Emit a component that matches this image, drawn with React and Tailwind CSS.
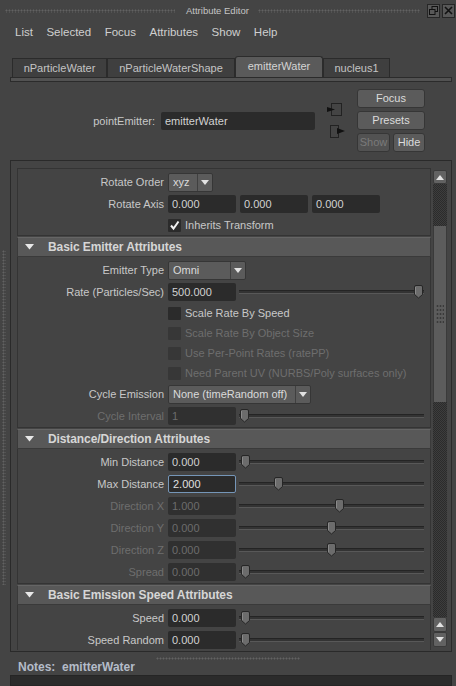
import React from "react";

function DownTri() {
  return (
    <svg width="8" height="5" viewBox="0 0 8 5">
      <path d="M0 0 H8 L4 5 Z" fill="#e2e2e2" />
    </svg>
  );
}

function UpTri() {
  return (
    <svg width="8" height="5" viewBox="0 0 8 5">
      <path d="M0 5 H8 L4 0 Z" fill="#e2e2e2" />
    </svg>
  );
}

function Dropdown({ text, w }) {
  return (
    <div className={`${w} h-[19px] flex rounded-[2px] bg-[#5b5b5b] border border-[#363636] overflow-hidden`}>
      <div className="flex-1 pl-[4px] flex items-center text-[#dadada] whitespace-nowrap">{text}</div>
      <div className="w-[15px] border-l border-[#404040] flex items-center justify-center">
        <DownTri />
      </div>
    </div>
  );
}

function Field({ value, disabled, focused }) {
  const base = "w-[68px] h-[18px] rounded-[2px] pl-[4px] flex items-center shrink-0";
  const cls = focused
    ? "bg-[#2b2b2b] border border-[#7596b8] text-[#e0e0e0] pl-[3px]"
    : disabled
    ? "bg-[#303030] text-[#6c6c6c]"
    : "bg-[#2b2b2b] text-[#d2d2d2]";
  return <div className={`${base} ${cls}`}>{value}</div>;
}

function Thumb() {
  return (
    <svg width="11" height="14" viewBox="0 0 11 14">
      <path
        d="M1.5 2 Q1.5 0.5 3 0.5 H8 Q9.5 0.5 9.5 2 V9.5 L5.5 13 L1.5 9.5 Z"
        fill="#6c6c6c"
        stroke="#262626"
      />
      <path d="M2.5 2 V9" stroke="#8a8a8a" strokeWidth="1" />
    </svg>
  );
}

function Slider({ pos }) {
  return (
    <div className="relative ml-[3px] w-[185px] h-[16px] flex items-center">
      <div className="w-full h-[4px] bg-[#333] border-t border-[#242424] border-b border-b-[#585858]" />
      <div className="absolute top-[1px]" style={{ left: pos }}>
        <Thumb />
      </div>
    </div>
  );
}

function Label({ text, disabled }) {
  return (
    <div
      className={`w-[146px] shrink-0 text-right whitespace-nowrap ${
        disabled ? "text-[#6e6e6e]" : "text-[#c8c8c8]"
      }`}
    >
      {text}
    </div>
  );
}

function Row({ label, disabled, children }) {
  return (
    <div className="flex items-center h-[22px]">
      <Label text={label} disabled={disabled} />
      <div className="ml-[4px] flex items-center">{children}</div>
    </div>
  );
}

function SliderRow({ label, value, pos, disabled, focused }) {
  return (
    <Row label={label} disabled={disabled}>
      <Field value={value} disabled={disabled} focused={focused} />
      <Slider pos={pos} />
    </Row>
  );
}

function Checkbox({ checked, disabled }) {
  return (
    <div
      className={`w-[13px] h-[13px] rounded-[1px] flex items-center justify-center shrink-0 ${
        disabled ? "bg-[#373737]" : "bg-[#2b2b2b]"
      }`}
    >
      {checked && (
        <svg width="11" height="11" viewBox="0 0 11 11">
          <path d="M2 5.5 L4.5 8.5 L9.5 1.5" stroke="#f0f0f0" strokeWidth="2" fill="none" />
        </svg>
      )}
    </div>
  );
}

function CheckRow({ text, checked, disabled }) {
  return (
    <div className="flex items-center h-[20px]">
      <div className="w-[146px] shrink-0" />
      <div className="ml-[4px] flex items-center">
        <Checkbox checked={checked} disabled={disabled} />
        <span className={`ml-[4px] whitespace-nowrap ${disabled ? "text-[#6e6e6e]" : "text-[#c8c8c8]"}`}>
          {text}
        </span>
      </div>
    </div>
  );
}

function Header({ title }) {
  return (
    <div className="h-[20px] shrink-0 bg-[#585858] border border-[#3a3a3a] border-t-[#656565] flex items-center">
      <div className="ml-[7px] flex items-center">
        <svg width="9" height="6" viewBox="0 0 9 6">
          <path d="M0 0 H9 L4.5 5.5 Z" fill="#e8e8e8" />
        </svg>
      </div>
      <div className="ml-[14px] font-bold text-[12px] text-[#d6d6d6] whitespace-nowrap tracking-[-0.1px]">
        {title}
      </div>
    </div>
  );
}

function Body({ children }) {
  return <div className="border border-t-0 border-[#343434] pt-[2px] shrink-0">{children}</div>;
}

function Tab({ text, w, active }) {
  return active ? (
    <div
      className={`${w} h-[21px] bg-[#5a5a5a] border border-b-0 border-[#2c2c2c] rounded-t-[3px] flex items-center justify-center text-[#d4d4d4] pb-[1px]`}
    >
      {text}
    </div>
  ) : (
    <div
      className={`${w} h-[19px] bg-[#3f3f3f] border border-b-0 border-[#2b2b2b] flex items-center justify-center text-[#c4c4c4]`}
    >
      {text}
    </div>
  );
}

function Button({ text, w, disabled }) {
  return (
    <div
      className={`${w} h-[19px] rounded-[3px] bg-[#5b5b5b] border border-[#363636] flex items-center justify-center ${
        disabled ? "text-[#7a7a7a] bg-[#525252]" : "text-[#dcdcdc]"
      }`}
    >
      {text}
    </div>
  );
}

const dots =
  "bg-[radial-gradient(circle,#626262_0.9px,transparent_1.1px)] bg-[length:3px_3px]";

export default function App() {
  return (
    <div className="w-[456px] h-[686px] bg-[#444444] overflow-hidden flex flex-col font-['Liberation_Sans',Arial,sans-serif] text-[11px] leading-none text-[#c8c8c8]">
      {/* Title bar */}
      <div className="h-[21px] shrink-0 flex items-center pl-[5px]">
        <div className={`w-[170px] h-[4px] ${dots}`} />
        <div className="ml-[11px] w-[66px] text-[9.5px] text-[#c4c4c4] whitespace-nowrap">Attribute Editor</div>
        <div className={`ml-[6px] w-[162px] h-[4px] ${dots}`} />
        <div className="ml-[7px] w-[13px] h-[14px] bg-[#585858] border border-[#262626] flex items-center justify-center">
          <svg width="9" height="9" viewBox="0 0 9 9">
            <rect x="3" y="0.5" width="5.5" height="5" fill="none" stroke="#111" />
            <rect x="0.5" y="3.5" width="5.5" height="5" fill="#585858" stroke="#111" />
          </svg>
        </div>
        <div className="ml-[2px] w-[13px] h-[14px] bg-[#585858] border border-[#262626] flex items-center justify-center">
          <svg width="9" height="9" viewBox="0 0 9 9">
            <path d="M1 1 L8 8 M8 1 L1 8" stroke="#111" strokeWidth="1.6" />
          </svg>
        </div>
      </div>

      {/* Menu bar */}
      <div className="h-[24px] shrink-0 flex items-center pl-[15px] gap-[13.5px] text-[11.5px] text-[#cfcfcf]">
        <span>List</span>
        <span>Selected</span>
        <span>Focus</span>
        <span>Attributes</span>
        <span>Show</span>
        <span>Help</span>
      </div>

      {/* Tabs */}
      <div className="h-[11px] shrink-0" />
      <div className="h-[21px] shrink-0 flex items-end pl-[12px]">
        <Tab text="nParticleWater" w="w-[95px]" />
        <Tab text="nParticleWaterShape" w="w-[128px]" />
        <Tab text="emitterWater" w="w-[88px]" active />
        <Tab text="nucleus1" w="w-[67px]" />
      </div>
      <div className="h-[5px] shrink-0 ml-[10px] w-[442px] bg-[#525252] border border-[#2b2b2b]" />

      {/* pointEmitter row */}
      <div className="h-[78px] shrink-0 flex pt-[7px]">
        <div className="w-[155px] pt-[23px] h-[41px] flex items-center justify-end text-[#c8c8c8]">pointEmitter:</div>
        <div className="ml-[6px] mt-[23px] w-[154px] h-[18px] bg-[#2b2b2b] rounded-[2px] pl-[4px] flex items-center text-[#d2d2d2]">
          emitterWater
        </div>
        <div className="ml-[12px] w-[18px] flex flex-col">
          <svg width="16" height="14" viewBox="0 0 16 14" className="mt-[14px]">
            <rect x="4.5" y="0.5" width="10" height="12" fill="none" stroke="#222" />
            <path d="M0 4 L8 6.5 L0 9 Z" fill="#111" />
          </svg>
          <svg width="18" height="14" viewBox="0 0 18 14" className="mt-[8px] ml-[3px]">
            <rect x="0.5" y="0.5" width="8" height="12" fill="none" stroke="#222" />
            <path d="M7 3 L15 6 L7 9 Z" fill="#111" />
          </svg>
        </div>
        <div className="ml-[12px] w-[68px] flex flex-col gap-[3px]">
          <Button text="Focus" w="w-[68px]" />
          <Button text="Presets" w="w-[68px]" />
          <div className="flex gap-[3px]">
            <Button text="Show" w="w-[33px]" disabled />
            <Button text="Hide" w="w-[32px]" />
          </div>
        </div>
      </div>

      {/* Main panel */}
      <div className="h-[492px] shrink-0 flex">
        <div className="w-[10px] shrink-0">
          <div className={`mt-[90px] ml-[2px] w-[4px] h-[335px] ${dots}`} />
        </div>
        <div className="w-[442px] shrink-0 border border-[#2a2a2a] flex pl-[6px] pt-[7px] pb-[1px] pr-[4px]">
          <div className="w-[414px] h-[482px] overflow-hidden flex flex-col gap-[1px] border-t border-[#343434]">
            <Body>
              <Row label="Rotate Order">
                <Dropdown text="xyz" w="w-[45px]" />
              </Row>
              <Row label="Rotate Axis">
                <div className="flex gap-[4px]">
                  <Field value="0.000" />
                  <Field value="0.000" />
                  <Field value="0.000" />
                </div>
              </Row>
              <CheckRow text="Inherits Transform" checked />
            </Body>

            <div className="flex flex-col shrink-0">
              <Header title="Basic Emitter Attributes" />
              <Body>
                <Row label="Emitter Type">
                  <Dropdown text="Omni" w="w-[78px]" />
                </Row>
                <SliderRow label="Rate (Particles/Sec)" value="500.000" pos={174} />
                <CheckRow text="Scale Rate By Speed" />
                <CheckRow text="Scale Rate By Object Size" disabled />
                <CheckRow text="Use Per-Point Rates (ratePP)" disabled />
                <CheckRow text="Need Parent UV (NURBS/Poly surfaces only)" disabled />
                <Row label="Cycle Emission">
                  <Dropdown text="None (timeRandom off)" w="w-[143px]" />
                </Row>
                <SliderRow label="Cycle Interval" value="1" pos={0} disabled />
              </Body>
            </div>

            <div className="flex flex-col shrink-0">
              <Header title="Distance/Direction Attributes" />
              <Body>
                <SliderRow label="Min Distance" value="0.000" pos={1} />
                <SliderRow label="Max Distance" value="2.000" pos={34} focused />
                <SliderRow label="Direction X" value="1.000" pos={95} disabled />
                <SliderRow label="Direction Y" value="0.000" pos={87} disabled />
                <SliderRow label="Direction Z" value="0.000" pos={87} disabled />
                <SliderRow label="Spread" value="0.000" pos={1} disabled />
              </Body>
            </div>

            <div className="flex flex-col shrink-0">
              <Header title="Basic Emission Speed Attributes" />
              <Body>
                <SliderRow label="Speed" value="0.000" pos={1} />
                <SliderRow label="Speed Random" value="0.000" pos={1} />
              </Body>
            </div>
          </div>

          {/* Scrollbar */}
          <div className="ml-[2px] w-[14px] flex flex-col pt-[2px] pb-[3px]">
            <div className="h-[14px] bg-[#626262] rounded-[2px] border border-[#3a3a3a] flex items-center justify-center">
              <UpTri />
            </div>
            <div className="h-[42px] bg-[repeating-conic-gradient(#2b2b2b_0%_25%,#3d3d3d_0%_50%)] bg-[length:2px_2px]" />
            <div className="h-[176px] bg-[#5c5c5c] border-x border-[#3a3a3a] flex items-center justify-center">
              <div className="w-[8px] h-[20px] bg-[radial-gradient(circle,#3a3a3a_0.9px,transparent_1.2px)] bg-[length:3px_4px]" />
            </div>
            <div className="h-[215px] bg-[repeating-conic-gradient(#2b2b2b_0%_25%,#3d3d3d_0%_50%)] bg-[length:2px_2px]" />
            <div className="h-[15px] bg-[#626262] rounded-[2px] border border-[#3a3a3a] flex items-center justify-center">
              <UpTri />
            </div>
            <div className="h-[15px] bg-[#626262] rounded-[2px] border border-[#3a3a3a] flex items-center justify-center">
              <DownTri />
            </div>
          </div>
        </div>
      </div>

      {/* Notes */}
      <div className="h-[8px] shrink-0 flex items-end justify-center">
        <div className={`w-[144px] h-[3px] ${dots}`} />
      </div>
      <div className="h-[15px] shrink-0 pl-[18px] flex items-center font-bold text-[12px] leading-[15px] text-[#b4bcc9] whitespace-nowrap">
        Notes:&nbsp; emitterWater
      </div>
      <div className="ml-[10px] w-[442px] h-[20px] bg-[#2b2b2b] border border-[#252525]" />
    </div>
  );
}
